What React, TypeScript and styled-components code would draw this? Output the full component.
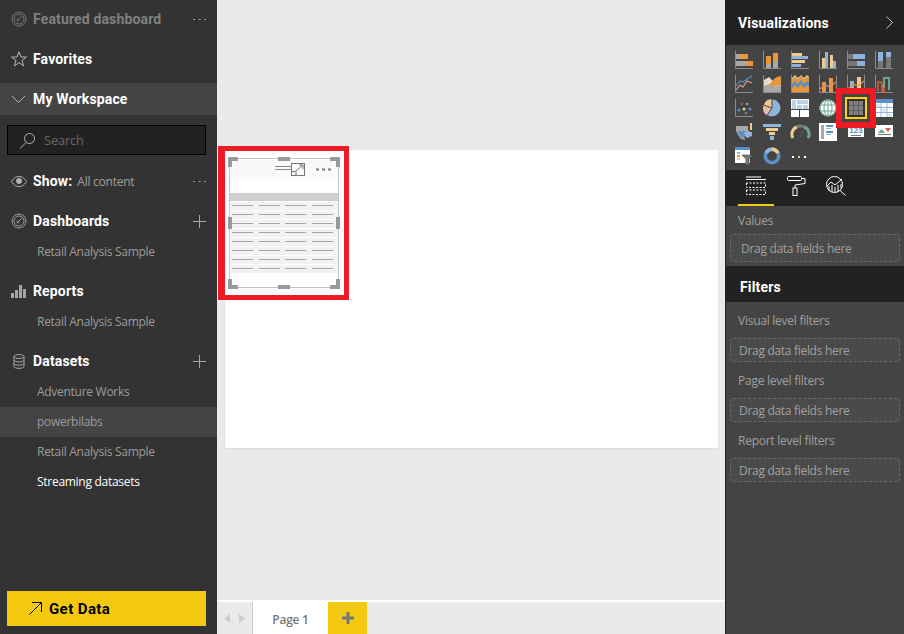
import React from "react";
import styled, { createGlobalStyle } from "styled-components";

const Global = createGlobalStyle`
  html, body { margin: 0; padding: 0; width: 904px; height: 634px; overflow: hidden; background: #eaeaea; }
  #root { width: 904px; height: 634px; }
  * { box-sizing: border-box; }
`;
const HEAD = `"Roboto", "Liberation Sans", sans-serif`;
const BODY = `"Open Sans", "Liberation Sans", sans-serif`;

const Shell = styled.div`display: flex; width: 904px; height: 634px; overflow: hidden;`;
const Side = styled.nav`width: 217px; height: 634px; background: #333; display: flex; flex-direction: column; padding-top: 3px; flex: none;`;
const Row = styled.div<{ $band?: boolean; $dim?: boolean }>`
  height: 32px; margin-bottom: 8px; display: flex; align-items: center; padding: 0 11px 0 11px;
  background: ${(p) => (p.$band ? "#444" : "transparent")};
  color: ${(p) => (p.$dim ? "#7f7f7f" : "#fff")};
  svg { flex: none; }
`;
const RowIcon = styled.span`width: 22px; height: 18px; display: flex; align-items: center; flex: none;`;
const RowLabel = styled.span`font: 700 14px ${HEAD}; letter-spacing: 0.15px; white-space: nowrap;`;
const RowNote = styled.span`font: 400 12px ${BODY}; letter-spacing: -0.25px; color: #a0a0a0; margin-left: 5px; white-space: nowrap;`;
const RowAction = styled.span`margin-left: auto; display: flex; align-items: center; width: 13px; height: 13px;`;
const SearchBox = styled.div`
  margin: 2px 11px 10px 7px; height: 30px; background: #222; border: 1px solid #000; flex: none;
  display: flex; align-items: center; padding-left: 11px; gap: 8px;
  font: 400 13px ${BODY}; letter-spacing: -0.25px; color: #666;
`;
const SubRow = styled.div<{ $band?: boolean; $bright?: boolean }>`
  height: 30px; display: flex; align-items: center; padding: 0 0 2px 37px;
  font: 400 12px ${BODY}; letter-spacing: -0.28px; white-space: nowrap;
  background: ${(p) => (p.$band ? "#444" : "transparent")};
  color: ${(p) => (p.$bright ? "#fff" : "#9c9c9c")};
`;
const Group = styled.div`margin-bottom: 8px;`;
const GroupHead = styled(Row)`margin-bottom: 0;`;
const GetData = styled.button`
  margin: auto 11px 8px 7px; height: 35px; flex: none; border: 0; background: #f2c811; color: #000;
  display: flex; align-items: center; padding: 0 0 0 22px; gap: 7px; font: 700 15px ${HEAD}; letter-spacing: 0.4px;
`;

const Center = styled.main`flex: 1; display: flex; flex-direction: column; min-width: 0; background: #eaeaea;`;
const Stage = styled.div`flex: 1; padding: 150px 7px 0 8px; position: relative;`;
const ReportPage = styled.div`width: 493px; height: 298px; background: #fff; box-shadow: 0 1px 2px rgba(0,0,0,.08);`;
const RedFrame = styled.div`
  position: absolute; left: 1px; top: 146px; width: 131px; height: 154px; background: #fff;
  border: solid #ed1c24; border-width: 5px 5px 5px 7px;
`;
const Visual = styled.div`
  position: absolute; left: 4px; top: 7px; width: 110px; height: 130px;
  border: 1px solid #c4c4c4; display: flex; flex-direction: column; padding: 1px 0 0;
`;
const VisualHead = styled.div`
  height: 19px; background: #f9f9f9; display: flex; align-items: center; justify-content: flex-end; gap: 10px; padding-right: 7px; flex: none;
`;
const TableHead = styled.div`height: 8px; margin-top: 14px; background: #d0d0d0; flex: none;`;
const TableRow = styled.div`
  height: 8px; margin-top: 1px; background: #f2f2f2; display: grid; grid-template-columns: repeat(4, 21px); column-gap: 5.5px;
  padding: 3px 0 0 2px; flex: none;
`;
const Dash = styled.i`display: block; height: 1px; background: #a6a6a6;`;
const Handle = styled.i<{ $x: number; $y: number; $w: number; $h: number }>`
  position: absolute; background: #999; left: ${(p) => p.$x}px; top: ${(p) => p.$y}px; width: ${(p) => p.$w}px; height: ${(p) => p.$h}px;
`;

const Tabs = styled.div`height: 34px; border-top: 2px solid #fff; display: flex; flex: none; padding-left: 0;`;
const Arrows = styled.div`width: 35px; display: flex; align-items: center; justify-content: space-around; padding-left: 3px; padding-right: 3px;`;
const PageTab = styled.div`
  width: 76px; background: #fff; border-left: 1px solid #ccc; display: flex; align-items: center; justify-content: center;
  font: 600 12px ${BODY}; letter-spacing: -0.25px; color: #777; padding-top: 2px;
`;
const AddTab = styled.div`width: 39px; background: #f2c811; display: flex; align-items: center; justify-content: center; svg { display: block; }`;

const Panel = styled.aside`width: 179px; flex: none; height: 634px; background: #444; display: flex; flex-direction: column; border-left: 1px solid #222; position: relative;`;
const PanelHead = styled.header`
  height: 45px; background: #222; margin-left: -1px; display: flex; align-items: center; justify-content: space-between; padding: 0 11px 0 13px;
  font: 700 14px ${HEAD}; color: #fff; letter-spacing: 0.15px; flex: none;
`;
const VizGrid = styled.div`height: 125px; padding: 6px 0 0 9px; display: grid; grid-template-columns: repeat(6, 18px); grid-auto-rows: 18px; column-gap: 10px; row-gap: 6px; align-content: start; flex: none;`;
const VizCell = styled.div<{ $on?: boolean }>`
  width: 18px; height: 18px; position: relative;
  svg { display: block; overflow: visible; }
  ${(p) => (p.$on ? "outline: 2px solid #fcd116; outline-offset: 0;" : "")}
`;
const RedRing = styled.i`position: absolute; left: 110px; top: 88px; width: 40px; height: 40px; border: 6px solid #ed1c24; pointer-events: none;`;
const PanelTabs = styled.div`height: 36px; background: #222; margin-left: -1px; display: flex; flex: none; padding-left: 13px;`;
const PanelTab = styled.div<{ $on?: boolean }>`
  width: 36px; margin-right: 4px; display: flex; align-items: center; justify-content: center; padding-bottom: 2px;
  border-bottom: 2px solid ${(p) => (p.$on ? "#f2c811" : "transparent")};
`;
const Fields = styled.section`height: 60px; padding: 5px 4px 0 4px; flex: none;`;
const FieldLabel = styled.div`height: 20px; display: flex; align-items: center; padding: 0 0 1px 8px; font: 400 12px ${BODY}; letter-spacing: -0.25px; color: #a0a0a0;`;
const Well = styled.div<{ $tall?: boolean }>`
  height: ${(p) => (p.$tall ? 28 : 24)}px; margin-top: ${(p) => (p.$tall ? 3 : 7)}px; border: 1px dashed #686868; border-radius: 3px; background: #4a4a4a;
  display: flex; align-items: center; padding-left: ${(p) => (p.$tall ? 10 : 8)}px; font: 400 12px ${BODY}; letter-spacing: -0.3px; color: #a0a0a0;
`;
const FilterHead = styled.header`height: 36px; background: #222; margin-left: -1px; display: flex; align-items: center; padding: 6px 0 0 15px; font: 700 14px ${HEAD}; color: #fff; letter-spacing: 0.15px; flex: none;`;
const FilterWrap = styled.section`padding: 9px 4px 0;`;
const FilterBlock = styled.div`height: 60px;`;

const O = "#e8963c", T = "#f0cb8f", B = "#8fb4dc", G = "#a8a8a8", D = "#777", A = "#8c8c8c", W = "#fff", LB = "#5b8fc7";
const S: React.FC<{ children: React.ReactNode; w?: number; h?: number }> = ({ children, w = 18, h = 18 }) => (
  <svg width={w} height={h} viewBox={`0 0 ${w} ${h}`}>{children}</svg>
);
const Axis = () => <path d="M.5 0V17.5H18" fill="none" stroke={A} />;
const R: React.FC<{ x: number; y: number; w: number; h: number; f: string }> = ({ x, y, w, h, f }) => <rect x={x} y={y} width={w} height={h} fill={f} />;

const icons: React.ReactNode[] = [
  <S><Axis /><R x={1} y={3} w={4} h={5} f={G} /><R x={5} y={3} w={8} h={5} f={O} /><R x={1} y={10} w={10} h={5} f={G} /><R x={11} y={10} w={7} h={5} f={O} /></S>,
  <S><Axis /><R x={3} y={5} w={5} h={8} f={O} /><R x={3} y={13} w={5} h={4} f={G} /><R x={10} y={2} w={5} h={8} f={O} /><R x={10} y={10} w={5} h={7} f={G} /></S>,
  <S><Axis /><R x={1} y={2} w={10} h={3} f={T} /><R x={1} y={5} w={16} h={3} f={B} /><R x={1} y={9} w={13} h={3} f={T} /><R x={1} y={13} w={9} h={3} f={B} /></S>,
  <S><Axis /><R x={3} y={7} w={3} h={10} f={T} /><R x={6} y={1} w={3} h={16} f={B} /><R x={11} y={4} w={3} h={13} f={T} /><R x={14} y={10} w={3} h={7} f={B} /></S>,
  <S><Axis /><R x={1} y={3} w={5} h={5} f={D} /><R x={6} y={3} w={12} h={5} f={B} /><R x={1} y={10} w={9} h={5} f={D} /><R x={10} y={10} w={8} h={5} f={B} /></S>,
  <S><Axis /><R x={3} y={1} w={5} h={9} f={B} /><R x={3} y={10} w={5} h={7} f={D} /><R x={11} y={1} w={5} h={5} f={B} /><R x={11} y={6} w={5} h={11} f={D} /></S>,

  <S><Axis /><path d="M1 15L5 10L8 12L12 6L17 8" fill="none" stroke="#e8a080" strokeWidth="1.2" /><path d="M1 11L5 6L8 7L12 4L17 1" fill="none" stroke={LB} strokeWidth="1.2" /></S>,
  <S><Axis /><path d="M1 5L6 2L10 6L14 4L18 3V17H1Z" fill="#e6dcc8" /><path d="M5 11L11 4L14 2L18 1V10L12 11L8 13Z" fill={O} /><path d="M1 11L6 9L10 12L18 10V17H1Z" fill={G} /></S>,
  <S><Axis /><path d="M1 5L4 2L7 5L10 1L13 5L16 2L18 4V17H1Z" fill={O} /><path d="M1 9L4 6L7 9L10 5L13 9L16 6L18 8V12L16 10L13 13L10 9L7 13L4 10L1 13Z" fill={LB} /><path d="M1 3L4 0L7 3L10 0L13 3L16 0L18 2V4L16 2L13 5L10 1L7 5L4 2L1 5Z" fill={T} /></S>,
  <S><path d="M.5 0V17.5H18M17.5 0V17" fill="none" stroke={A} /><R x={3} y={7} w={4} h={10} f={O} /><R x={10} y={3} w={4} h={14} f={O} /><path d="M1 14L6 10L11 12L17 7" fill="none" stroke="#d88" strokeWidth="1.1" /></S>,
  <S><path d="M.5 0V17.5H18M17.5 0V17" fill="none" stroke={A} /><R x={3} y={6} w={4} h={11} f={B} /><R x={10} y={2} w={4} h={15} f={T} /><path d="M1 14L6 9L11 11L17 6" fill="none" stroke={O} strokeWidth="1.1" /></S>,
  <S><Axis /><path d="M3 16V7H6L9 14V17H7V9" fill="none" stroke="#d9603a" strokeWidth="1.6" /><path d="M9 13V3H14V15M14 15V3" fill="none" stroke="#6aa58e" strokeWidth="2" /></S>,

  <S><Axis /><circle cx={4} cy={11} r={1.5} fill={LB} /><circle cx={7} cy={5} r={1.2} fill="#c0504d" /><circle cx={9} cy={10} r={1.5} fill={T} /><circle cx={12} cy={5} r={1.3} fill="#7fb5a0" /><circle cx={15} cy={10} r={1.5} fill={LB} /><circle cx={11} cy={14} r={1.5} fill={D} /></S>,
  <S><circle cx={9} cy={9} r={8.5} fill={B} /><path d="M9 9V0A9 9 0 0 0 .8 6Z" fill={T} /><path d="M9 9L.8 6A9 9 0 0 0 4 16.5Z" fill="#e8b8a8" /><path d="M9 0V9L.8 6" fill="none" stroke="#444" /><path d="M9 9L4 16.5" stroke="#444" /></S>,
  <S><R x={0} y={0} w={18} h={18} f={W} /><R x={6} y={1} w={11} h={4} f="#bcd1e8" /><R x={1} y={1} w={4} h={9} f="#bcd1e8" /><R x={6} y={6} w={5} h={4} f="#bcd1e8" /><R x={12} y={6} w={5} h={4} f="#bcd1e8" /><path d="M8.500 11V18" stroke="#444" /><path d="M0 10.500H18" stroke="#444" /></S>,
  <S><circle cx={9} cy={9} r={8.5} fill={W} /><circle cx={9} cy={9} r={8} fill="none" stroke="#6aa58e" strokeWidth="1" /><ellipse cx={9} cy={9} rx={4} ry={8} fill="none" stroke="#6aa58e" /><path d="M1 6H17M1 12H17M9 1V17" stroke="#6aa58e" /></S>,
  <S><R x={0} y={0} w={18} h={18} f="#333" /><R x={2} y={2} w={14} h={14} f="#808080" /><path d="M6.500 2V16M11.500 2V16M2 6.500H16M2 11.500H16" stroke="#5c5c5c" /></S>,
  <S><R x={0} y={0} w={18} h={18} f={W} /><R x={0} y={0} w={18} h={4} f={LB} /><path d="M6 4V18M12 4V18M0 8.500H18M0 13.500H18" stroke={B} /><R x={1} y={5} w={4} h={3} f="#dbe6f2" /><R x={7} y={10} w={4} h={3} f="#dbe6f2" /><R x={13} y={15} w={4} h={3} f="#dbe6f2" /></S>,

  <S><path d="M1 3H13V7L15 9L12 12L9 11L10 17L6 16L3 12L1 8Z" fill={G} /><path d="M3 8H11V12L7 15L4 12Z" fill={LB} /><path d="M9 9H17V13L12 15L10 13Z" fill={B} /><R x={15} y={0} w={2} h={7} f={T} /></S>,
  <S><R x={0} y={1} w={18} h={3} f={B} /><R x={3} y={5} w={12} h={3} f={T} /><R x={6} y={9} w={6} h={3} f={T} /><R x={7} y={13} w={4} h={4} f={B} /></S>,
  <S><path d="M2 15A7.500 7.500 0 0 1 6 4" fill="none" stroke={T} strokeWidth="3" /><path d="M6 4A7.500 7.500 0 0 1 13 4" fill="none" stroke={D} strokeWidth="3" /><path d="M13 4A7.500 7.500 0 0 1 17 15" fill="none" stroke="#6aa58e" strokeWidth="3" /><path d="M9 14L12 8" stroke="#555" strokeWidth="1.500" /></S>,
  <S><R x={0} y={0} w={18} h={18} f={W} /><R x={2} y={2} w={3} h={14} f={G} /><R x={7} y={2} w={7} h={2} f={LB} /><R x={7} y={5} w={5} h={1} f={B} /><R x={7} y={8} w={7} h={2} f={LB} /><R x={7} y={11} w={5} h={1} f={B} /></S>,
  <S><R x={1} y={2} w={16} h={12} f={W} /><text x={9} y={10} textAnchor="middle" fontFamily="Liberation Sans, sans-serif" fontSize="8" fontWeight="700" fill={LB}>123</text><R x={4} y={12} w={10} h={1} f={D} /></S>,
  <S><R x={0} y={2} w={18} h={12} f={W} /><path d="M3 10L6.500 6L10 10Z" fill="#6aa58e" /><path d="M10 5H16L13 9Z" fill="#d9603a" /><R x={3} y={11} w={13} h={1} f={D} /></S>,

  <S><R x={0} y={0} w={15} h={16} f={W} /><R x={0} y={0} w={15} h={3} f={LB} /><R x={2} y={5} w={3} h={2} f={B} /><R x={2} y={8} w={3} h={2} f={O} /><R x={2} y={11} w={3} h={2} f={T} /><path d="M7 8H18L14 12V18H11V12Z" fill="#777" stroke="#444" strokeWidth=".6" /></S>,
  <S><circle cx={9} cy={9} r={6.700} fill="none" stroke={LB} strokeWidth="3.600" /><path d="M9 2.300A6.700 6.700 0 0 1 15 6" fill="none" stroke={T} strokeWidth="3.600" /><path d="M3 6A6.700 6.700 0 0 1 9 2.300" fill="none" stroke={B} strokeWidth="3.600" /></S>,
  <S><R x={1} y={9} w={2} h={2} f={W} /><R x={7} y={9} w={2} h={2} f={T} /><R x={13} y={9} w={2} h={2} f={W} /></S>,
];

const Gauge = ({ c = "#9a9a9a" }: { c?: string }) => (
  <svg width="16" height="16" viewBox="0 0 16 16" fill="none" stroke={c}><circle cx="8" cy="8" r="7" /><circle cx="8" cy="8" r="5" /><circle cx="7" cy="9" r="1" /><path d="M8 8L11 5" /></svg>
);
const Dots = () => (
  <svg width="13" height="3" viewBox="0 0 13 3"><path d="M0 1.500H2M5.500 1.500H7.500M11 1.500H13" stroke="#9a9a9a" /></svg>
);
const Plus = () => (
  <svg width="13" height="13" viewBox="0 0 13 13"><path d="M6.500 0V13M0 6.500H13" stroke="#a6a6a6" /></svg>
);

export default function App() {
  return (
    <Shell>
      <Global />
      <Side>
        <Row $dim>
          <RowIcon><Gauge c="#777" /></RowIcon><RowLabel>Featured dashboard</RowLabel>
          <RowAction><Dots /></RowAction>
        </Row>
        <Row>
          <RowIcon><svg width="16" height="16" viewBox="0 0 16 16" fill="none" stroke="#b5b5b5"><path d="M8 .8L10 6H15.500L11 9.400L12.700 15L8 11.600L3.300 15L5 9.400L.5 6H6Z" /></svg></RowIcon>
          <RowLabel>Favorites</RowLabel>
        </Row>
        <Row $band>
          <RowIcon><svg width="15" height="9" viewBox="0 0 15 9" fill="none" stroke="#b5b5b5"><path d="M1 1L7.500 7.500L14 1" /></svg></RowIcon>
          <RowLabel>My Workspace</RowLabel>
        </Row>
        <SearchBox>
          <svg width="17" height="17" viewBox="0 0 17 17" fill="none" stroke="#b5b5b5"><circle cx="10.500" cy="6.500" r="5" /><path d="M7 10.500L1 16.500" /></svg>
          <span>Search</span>
        </SearchBox>
        <Row>
          <RowIcon><svg width="16" height="11" viewBox="0 0 16 11" fill="none" stroke="#b5b5b5"><path d="M.5 5.500C3 1.500 5.500 .5 8 .5S13 1.500 15.500 5.500C13 9.500 10.500 10.500 8 10.500S3 9.500 .5 5.500Z" /><circle cx="8" cy="5" r="2.500" fill="#b5b5b5" /></svg></RowIcon>
          <RowLabel>Show:</RowLabel><RowNote>All content</RowNote>
          <RowAction><Dots /></RowAction>
        </Row>
        <Group>
          <GroupHead>
            <RowIcon><Gauge /></RowIcon><RowLabel>Dashboards</RowLabel>
            <RowAction><Plus /></RowAction>
          </GroupHead>
          <SubRow>Retail Analysis Sample</SubRow>
        </Group>
        <Group>
          <GroupHead>
            <RowIcon><svg width="16" height="13" viewBox="0 0 16 13" fill="#a6a6a6"><rect x="0" y="8" width="3" height="5" /><rect x="4" y="5" width="3" height="8" /><rect x="8" y="0" width="3" height="13" /><rect x="12" y="4" width="3" height="9" /></svg></RowIcon>
            <RowLabel>Reports</RowLabel>
          </GroupHead>
          <SubRow>Retail Analysis Sample</SubRow>
        </Group>
        <Group>
          <GroupHead>
            <RowIcon><svg width="16" height="15" viewBox="0 0 16 15" fill="none" stroke="#a6a6a6"><ellipse cx="8" cy="2.500" rx="5" ry="2" /><path d="M3 2.500V12.500C3 15 13 15 13 12.500V2.500M3 6C3 8.500 13 8.500 13 6M3 9.300C3 11.800 13 11.800 13 9.300" /></svg></RowIcon>
            <RowLabel>Datasets</RowLabel>
            <RowAction><Plus /></RowAction>
          </GroupHead>
          <SubRow>Adventure Works</SubRow>
          <SubRow $band>powerbilabs</SubRow>
          <SubRow>Retail Analysis Sample</SubRow>
          <SubRow $bright>Streaming datasets</SubRow>
        </Group>
        <GetData>
          <svg width="13" height="13" viewBox="0 0 13 13" fill="none" stroke="#000"><path d="M.5 12.500L12 1M3 .5H12.500V10" /></svg>
          <span>Get Data</span>
        </GetData>
      </Side>

      <Center>
        <Stage>
          <ReportPage />
          <RedFrame>
            <Visual>
              <VisualHead>
                <svg width="31" height="13" viewBox="0 0 31 13" fill="none" stroke="#8a8a8a"><path d="M0 3.500H16M0 6.500H16" /><rect x="16.500" y=".5" width="13" height="12" stroke="#777" /><path d="M21 8L28 2M24 2H28V6M16 8.500H21V13" stroke="#777" /></svg>
                <svg width="15" height="3" viewBox="0 0 15 3"><path d="M0 1.500H3M6 1.500H9M12 1.500H15" stroke="#777" strokeWidth="2" /></svg>
              </VisualHead>
              <TableHead />
              {Array.from({ length: 8 }).map((_, i) => (
                <TableRow key={i}><Dash /><Dash /><Dash /><Dash /></TableRow>
              ))}
            </Visual>
            <Handle $x={3} $y={6} $w={10} $h={4} /><Handle $x={3} $y={6} $w={4} $h={10} />
            <Handle $x={105} $y={6} $w={10} $h={4} /><Handle $x={111} $y={6} $w={4} $h={10} />
            <Handle $x={3} $y={134} $w={10} $h={4} /><Handle $x={3} $y={128} $w={4} $h={10} />
            <Handle $x={105} $y={134} $w={10} $h={4} /><Handle $x={111} $y={128} $w={4} $h={10} />
            <Handle $x={53} $y={6} $w={12} $h={4} /><Handle $x={53} $y={134} $w={12} $h={4} />
            <Handle $x={3} $y={66} $w={4} $h={12} /><Handle $x={111} $y={66} $w={4} $h={12} />
          </RedFrame>
        </Stage>
        <Tabs>
          <Arrows>
            <svg width="6" height="9" viewBox="0 0 6 9"><path d="M6 0V9L0 4.500Z" fill="#ccc" /></svg>
            <svg width="6" height="9" viewBox="0 0 6 9"><path d="M0 0V9L6 4.500Z" fill="#ccc" /></svg>
          </Arrows>
          <PageTab>Page 1</PageTab>
          <AddTab><svg width="12" height="12" viewBox="0 0 12 12"><path d="M6 0V12M0 6H12" stroke="#777" strokeWidth="3" /></svg></AddTab>
        </Tabs>
      </Center>

      <Panel>
        <PanelHead>
          <span>Visualizations</span>
          <svg width="7" height="13" viewBox="0 0 7 13" fill="none" stroke="#c8c8c8"><path d="M.5 .5L6.500 6.500L.5 12.500" /></svg>
        </PanelHead>
        <VizGrid>
          {icons.map((ic, i) => <VizCell key={i} $on={i === 16}>{ic}</VizCell>)}
        </VizGrid>
        <RedRing />
        <PanelTabs>
          <PanelTab $on>
            <svg width="20" height="20" viewBox="0 0 20 20" fill="none" stroke="#fff"><path d="M0 1H15" /><path d="M0 3.500H20" /><path d="M.5 7V11.500H19.500V7H.5Z" strokeDasharray="2 1.500" /><path d="M.5 14V18.500H19.500V14H.5Z" strokeDasharray="2 1.500" /></svg>
          </PanelTab>
          <PanelTab>
            <svg width="19" height="20" viewBox="0 0 19 20" fill="none" stroke="#fff"><rect x=".5" y=".5" width="14" height="4" rx="1" /><path d="M14.500 2.500H18V7.500L8 9V12" /><rect x="6" y="12" width="4" height="7.500" /></svg>
          </PanelTab>
          <PanelTab>
            <svg width="20" height="20" viewBox="0 0 20 20" fill="none" stroke="#fff"><circle cx="8.500" cy="8.500" r="8" /><path d="M14 14.500L19.500 19.500" /><path d="M1 10L5 6L9 9L16 3" /><path d="M3 10V15M6 9V16M9 11V16.500M12 9V16M15 8V12" /></svg>
          </PanelTab>
        </PanelTabs>
        <Fields>
          <FieldLabel>Values</FieldLabel>
          <Well $tall>Drag data fields here</Well>
        </Fields>
        <FilterHead>Filters</FilterHead>
        <FilterWrap>
          {["Visual level filters", "Page level filters", "Report level filters"].map((t) => (
            <FilterBlock key={t}>
              <FieldLabel>{t}</FieldLabel>
              <Well>Drag data fields here</Well>
            </FilterBlock>
          ))}
        </FilterWrap>
      </Panel>
    </Shell>
  );
}
